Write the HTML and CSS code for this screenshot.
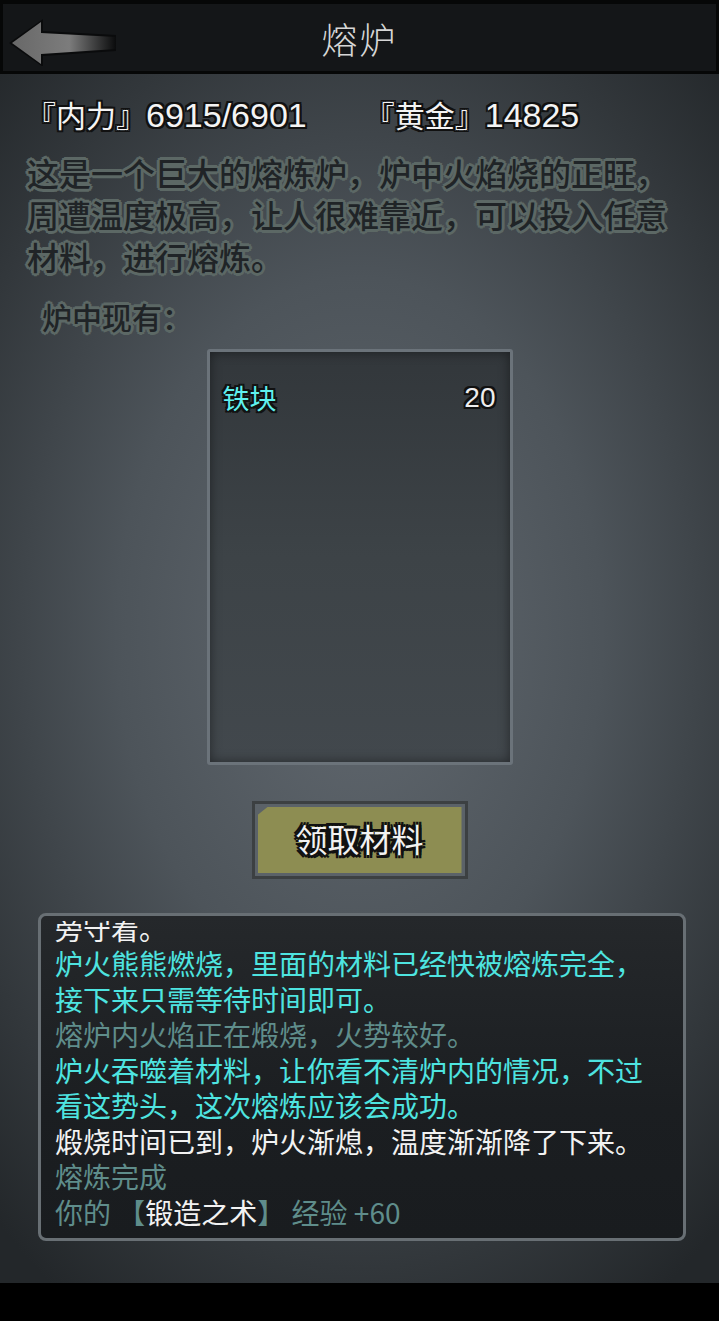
FILE: index.html
```html
<!DOCTYPE html>
<html lang="zh">
<head>
    <meta charset="UTF-8">
    <meta name="viewport" content="width=device-width, initial-scale=1.0">
    <title>熔炉</title>
    <link rel="stylesheet" href="styles.css">
</head>
<body>

    <header class="top-bar">
        <a class="back-btn" href="#">
            <svg viewBox="0 0 120 50" width="120" height="50">
                <defs>
                    <linearGradient id="arrowFill" x1="0" y1="0" x2="1" y2="0">
                        <stop offset="0" stop-color="#686868"/>
                        <stop offset="0.55" stop-color="#7c7c7c"/>
                        <stop offset="1" stop-color="#7c7c7c" stop-opacity="0"/>
                    </linearGradient>
                </defs>
                <path d="M9 28 L43 4 L43 16 L116 20 L116 36 L43 41 L43 52 Z" fill="#0a0b0c" transform="translate(0 -1)"/>
                <path d="M12 28 L41 7 L41 18 L116 22 L116 34 L41 39 L41 49 Z" fill="url(#arrowFill)" transform="translate(0 -1)"/>
            </svg>
        </a>
        <h1>熔炉</h1>
    </header>

    <main class="content">
        <div class="stats">
            <span class="stat">『内力』<span class="num">6915/6901</span></span>
            <span class="stat">『黄金』<span class="num">14825</span></span>
        </div>

        <p class="desc">这是一个巨大的熔炼炉，炉中火焰烧的正旺，周遭温度极高，让人很难靠近，可以投入任意材料，进行熔炼。</p>

        <p class="label">炉中现有：</p>

        <div class="furnace">
            <div class="item-row">
                <span class="item-name">铁块</span>
                <span class="item-count">20</span>
            </div>
        </div>

        <button class="take-btn"><span>领取材料</span></button>

        <div class="log-box">
            <div class="log-scroll">
                <div class="log">
                    <div class="line white">旁守着。</div>
                    <div class="line cyan">炉火熊熊燃烧，里面的材料已经快被熔炼完全，接下来只需等待时间即可。</div>
                    <div class="line gray">熔炉内火焰正在煅烧，火势较好。</div>
                    <div class="line cyan">炉火吞噬着材料，让你看不清炉内的情况，不过看这势头，这次熔炼应该会成功。</div>
                    <div class="line white">煅烧时间已到，炉火渐熄，温度渐渐降了下来。</div>
                    <div class="line gray">熔炼完成</div>
                    <div class="line gray">你的 【<span class="white">锻造之术</span>】 经验 +60</div>
                </div>
            </div>
        </div>
    </main>

    <footer class="bottom-bar"></footer>

</body>
</html>
```

FILE: styles.css
```css
/* Umum */
* {
    margin: 0;
    padding: 0;
    box-sizing: border-box;
}

body {
    width: 719px;
    height: 1321px;
    display: flex;
    flex-direction: column;
    overflow: hidden;
    font-family: "Liberation Sans", "Noto Sans CJK SC", sans-serif;
    background: radial-gradient(ellipse 75% 60% at 50% 48%, #626970 0%, #4d545a 45%, #32373b 80%, #23272a 100%);
    color: #fff;
}

/* Header */
.top-bar {
    position: relative;
    height: 74px;
    background: #141618;
    border: 3px solid #060707;
    border-top-width: 4px;
    display: flex;
    align-items: center;
    justify-content: center;
}

.back-btn {
    position: absolute;
    left: -3px;
    top: 12px;
    display: block;
}

.top-bar h1 {
    font-family: "Noto Sans CJK SC", sans-serif;
    font-weight: 300;
    font-size: 36px;
    color: #d6d6d6;
    letter-spacing: 2px;
}

/* Isi */
.content {
    flex: 1;
    display: flex;
    flex-direction: column;
}

.stats {
    margin-top: 21px;
    padding-left: 26px;
    display: flex;
    gap: 58px;
    font-size: 30px;
    line-height: 40px;
    color: #f4f4f4;
    text-shadow: -2px -2px 0 #111, 2px -2px 0 #111, -2px 2px 0 #111, 2px 2px 0 #111,
                 0 -2px 0 #111, 0 2px 0 #111, -2px 0 0 #111, 2px 0 0 #111;
}

.stats .num {
    font-size: 34px;
}

.desc,
.label {
    font-family: "Noto Sans CJK SC", sans-serif;
    font-weight: 500;
    color: #202427;
    text-shadow: -2px -2px 0 #5c6865, 2px -2px 0 #5c6865, -2px 2px 0 #5c6865, 2px 2px 0 #5c6865,
                 0 -3px 0 #5c6865, 0 3px 0 #5c6865, -3px 0 0 #5c6865, 3px 0 0 #5c6865;
}

.desc {
    margin-top: 14px;
    padding: 0 27px;
    font-size: 32px;
    line-height: 42px;
}

.label {
    margin-top: 19px;
    padding-left: 42px;
    font-size: 30px;
    line-height: 40px;
}

/* Kotak tungku */
.furnace {
    margin: 13px auto 0;
    width: 306px;
    height: 416px;
    border: 3px solid #6b737a;
    border-radius: 3px;
    background: linear-gradient(#32373b, #3d4347 50%, #42484d);
    box-shadow: inset 0 0 12px rgba(0, 0, 0, 0.45);
    padding: 28px 14px 0 13px;
}

.item-row {
    display: flex;
    justify-content: space-between;
    font-size: 28px;
    line-height: 36px;
}

.item-name {
    font-family: "Noto Sans CJK SC", sans-serif;
    font-size: 27px;
    color: #5ff0ee;
    text-shadow: -2px -2px 0 #111, 2px -2px 0 #111, -2px 2px 0 #111, 2px 2px 0 #111,
                 0 -2px 0 #111, 0 2px 0 #111, -2px 0 0 #111, 2px 0 0 #111;
}

.item-count {
    color: #eee;
    text-shadow: -2px -2px 0 #111, 2px -2px 0 #111, -2px 2px 0 #111, 2px 2px 0 #111,
                 0 -2px 0 #111, 0 2px 0 #111, -2px 0 0 #111, 2px 0 0 #111;
}

/* Tombol */
.take-btn {
    margin: 36px auto 0;
    width: 216px;
    height: 78px;
    border: 3px solid #3c4042;
    background: #5b6268;
    padding: 3px;
    cursor: pointer;
}

.take-btn span {
    display: flex;
    align-items: center;
    justify-content: center;
    height: 100%;
    background: #8d8d52;
    clip-path: polygon(10px 0, 100% 0, 100% 100%, 0 100%, 0 8px);
    font-family: "Noto Sans CJK SC", sans-serif;
    font-size: 32px;
    color: #f2f2f2;
    padding-bottom: 4px;
    text-shadow: -3px -3px 0 #111, 3px -3px 0 #111, -3px 3px 0 #111, 3px 3px 0 #111,
                 0 -3px 0 #111, 0 3px 0 #111, -3px 0 0 #111, 3px 0 0 #111;
}

/* Log */
.log-box {
    margin: 34px 0 0 38px;
    width: 648px;
    height: 328px;
    border: 3px solid #686f74;
    border-radius: 8px;
    background: linear-gradient(#25282b, #1b1e21 60%, #191c1f);
    padding: 5px 28px 8px 14px;
}

.log-scroll {
    height: 100%;
    overflow: hidden;
    display: flex;
    flex-direction: column;
    justify-content: flex-end;
}

.log {
    font-family: "Noto Sans CJK SC", sans-serif;
    font-size: 28px;
    line-height: 35.5px;
}

.white {
    color: #f2f2f2;
}

.cyan {
    color: #4ee4e0;
}

.gray {
    color: #5f8d8b;
}

.bottom-bar {
    height: 38px;
    background: #000;
}
```
